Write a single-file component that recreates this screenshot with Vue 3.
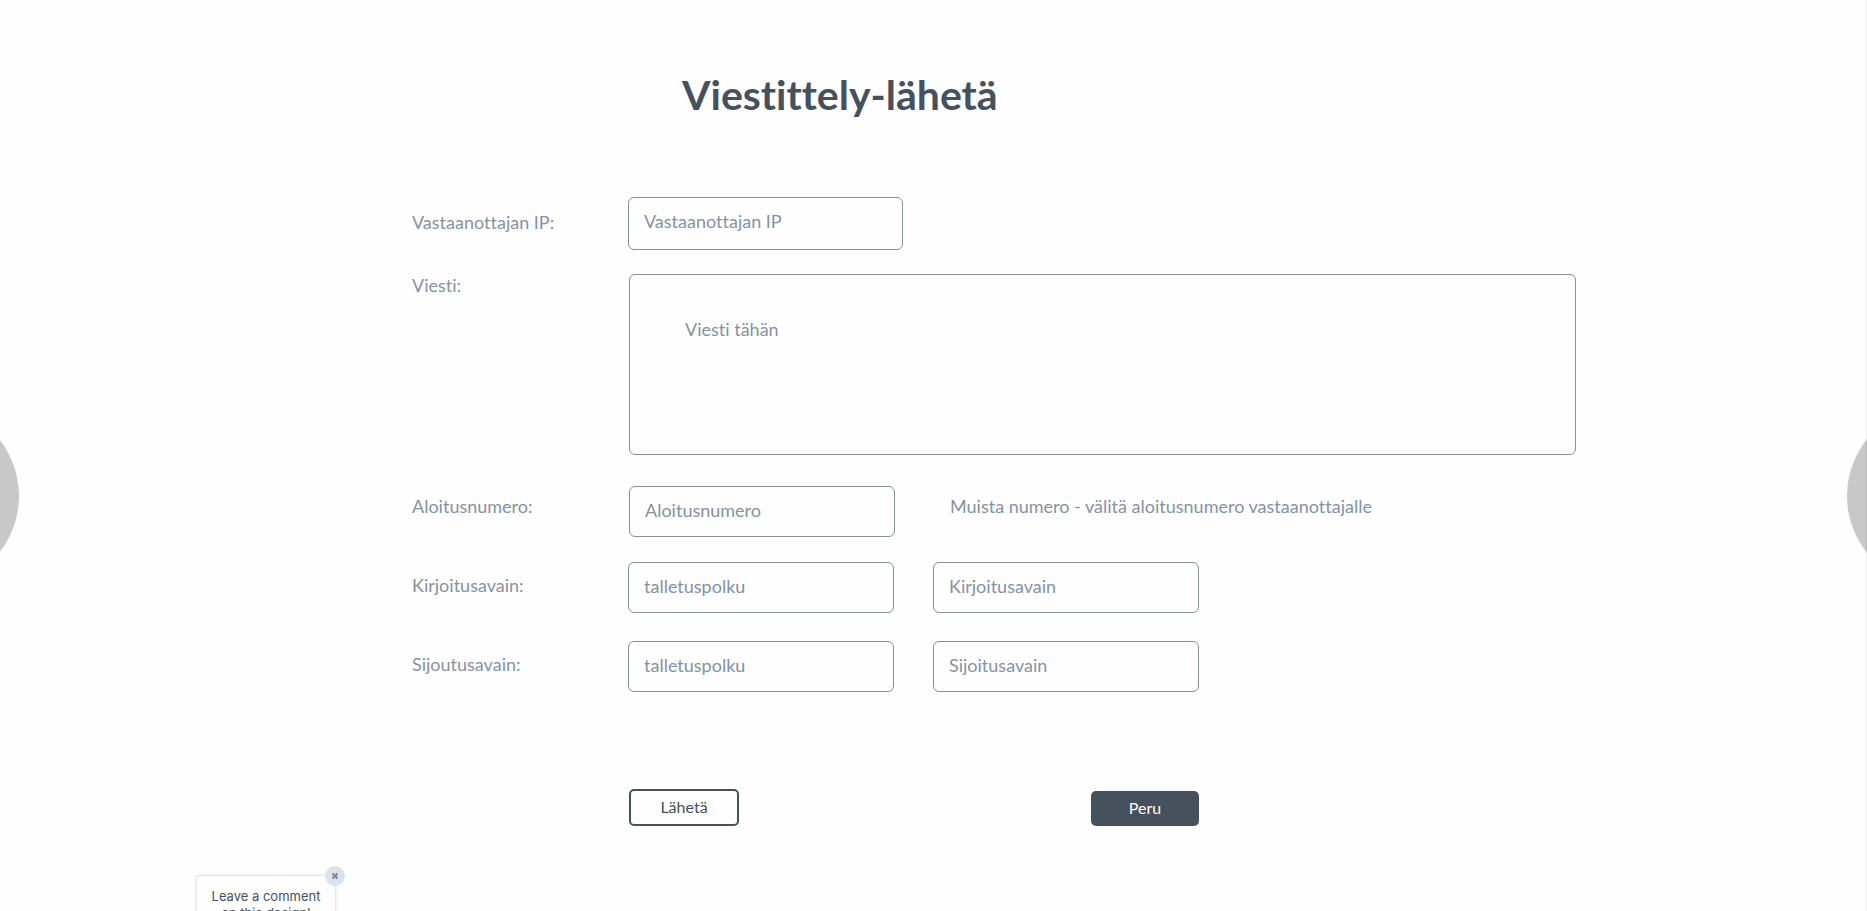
<script setup>
import { ref } from 'vue'

const form = ref({ ip: '', message: '', start: '', writePath: '', writeKey: '', placePath: '', placeKey: '' })
const commentOpen = ref(true)
</script>

<template>
  <main class="page">
    <h1>Viestittely-lähetä</h1>

    <form @submit.prevent>
      <div class="row recipient">
        <label for="ip">Vastaanottajan IP:</label>
        <input id="ip" v-model="form.ip" type="text" placeholder="Vastaanottajan IP" />
      </div>
      <div class="row message">
        <label for="message">Viesti:</label>
        <textarea id="message" v-model="form.message" placeholder="Viesti tähän"></textarea>
      </div>
      <div class="row start">
        <label for="start">Aloitusnumero:</label>
        <input id="start" v-model="form.start" type="text" placeholder="Aloitusnumero" />
        <p class="hint">Muista numero - välitä aloitusnumero vastaanottajalle</p>
      </div>
      <div class="row key">
        <label for="write-path">Kirjoitusavain:</label>
        <input id="write-path" v-model="form.writePath" type="text" placeholder="talletuspolku" />
        <input v-model="form.writeKey" type="text" placeholder="Kirjoitusavain" aria-label="Kirjoitusavain" />
      </div>
      <div class="row key">
        <label for="place-path">Sijoutusavain:</label>
        <input id="place-path" v-model="form.placePath" type="text" placeholder="talletuspolku" />
        <input v-model="form.placeKey" type="text" placeholder="Sijoitusavain" aria-label="Sijoitusavain" />
      </div>
      <div class="actions">
        <button class="send" type="submit">Lähetä</button>
        <button class="cancel" type="button">Peru</button>
      </div>
    </form>

    <button class="nav prev" type="button" aria-label="Edellinen"></button>
    <button class="nav next" type="button" aria-label="Seuraava"></button>
    <div class="edge"></div>

    <aside v-if="commentOpen" class="comment">
      Leave a comment<br />on this design!
      <button type="button" aria-label="Close" @click="commentOpen = false">
        <svg viewBox="0 0 8 8" width="8" height="8"><path d="M1.5 1.5l5 5M6.5 1.5l-5 5" /></svg>
      </button>
    </aside>
  </main>
</template>

<style>
body {
  margin: 0;
  background: #fefefe;
}
</style>

<style scoped>
.page {
  position: relative;
  box-sizing: border-box;
  min-height: 100vh;
  padding: 70px 291px 0 412px;
  overflow: hidden;
  font-family: Lato, sans-serif;
  font-size: 18px;
  line-height: 22px;
  font-variant-ligatures: none;
  color: #8592a3;
}
h1 {
  margin: 0 0 77px 270px;
  font-size: 41px;
  line-height: 50px;
  font-weight: 700;
  color: #47515d;
}
.row {
  display: grid;
  align-items: start;
}
.recipient {
  grid-template-columns: 216px 275px;
  margin-bottom: 24px;
}
.message {
  grid-template-columns: 217px 1fr;
  margin-bottom: 31px;
}
.start {
  grid-template-columns: 217px 266px 1fr;
  margin-bottom: 25px;
}
.key {
  grid-template-columns: 216px 266px 266px;
  margin-bottom: 28px;
}
.key input:last-child {
  margin-left: 39px;
}
.recipient label {
  padding-top: 14px;
}
.start label,
.hint {
  padding-top: 9px;
}
.key label {
  padding-top: 12px;
}
.hint {
  margin: 0 0 0 55px;
}
input,
textarea {
  box-sizing: border-box;
  width: 100%;
  margin: 0;
  border: 1px solid #868f9b;
  border-radius: 6px;
  outline: none;
  background: transparent;
  font: inherit;
  font-variant-ligatures: none;
  color: #47515d;
}
input {
  height: 51px;
  padding: 0 15px 3px;
}
.recipient input {
  height: 53px;
  padding-bottom: 6px;
}
textarea {
  display: block;
  height: 181px;
  padding: 43px 55px;
  resize: none;
}
input::placeholder,
textarea::placeholder {
  color: #8592a3;
  opacity: 1;
}
.actions {
  display: flex;
  justify-content: space-between;
  align-items: flex-end;
  width: 570px;
  margin: 97px 0 0 217px;
}
.actions button {
  box-sizing: border-box;
  padding: 0 0 2px;
  border-radius: 5px;
  font: inherit;
  font-size: 16px;
  line-height: 20px;
}
.send {
  width: 110px;
  height: 37px;
  border: 2px solid #47515d;
  background: transparent;
  color: #47515d;
}
.cancel {
  width: 108px;
  height: 35px;
  border: 0;
  background: #47515d;
  color: #fefefe;
}
.nav {
  position: absolute;
  top: 405px;
  width: 182px;
  height: 182px;
  padding: 0;
  border: 0;
  border-radius: 50%;
  background: #c8c8c8;
}
.prev {
  left: -163px;
}
.next {
  right: -162px;
}
.edge {
  position: absolute;
  top: 0;
  right: 0;
  bottom: 0;
  width: 1px;
  background: rgba(0, 0, 0, 0.06);
}
.comment {
  position: absolute;
  top: 875px;
  left: 196px;
  box-sizing: border-box;
  width: 140px;
  padding: 12px 0;
  border: 1px solid #e4e7ec;
  border-radius: 5px;
  box-shadow: 0 0 3px rgba(71, 81, 93, 0.15);
  background: #fefefe;
  font-family: Inter, sans-serif;
  font-size: 13px;
  line-height: 17px;
  text-align: center;
  color: #47515d;
}
.comment button {
  position: absolute;
  top: -10px;
  right: -10px;
  display: flex;
  align-items: center;
  justify-content: center;
  width: 20px;
  height: 20px;
  padding: 0;
  border: 0;
  border-radius: 50%;
  background: #dbe2ec;
}
.comment path {
  fill: none;
  stroke: #7a8594;
  stroke-width: 2;
}
</style>
